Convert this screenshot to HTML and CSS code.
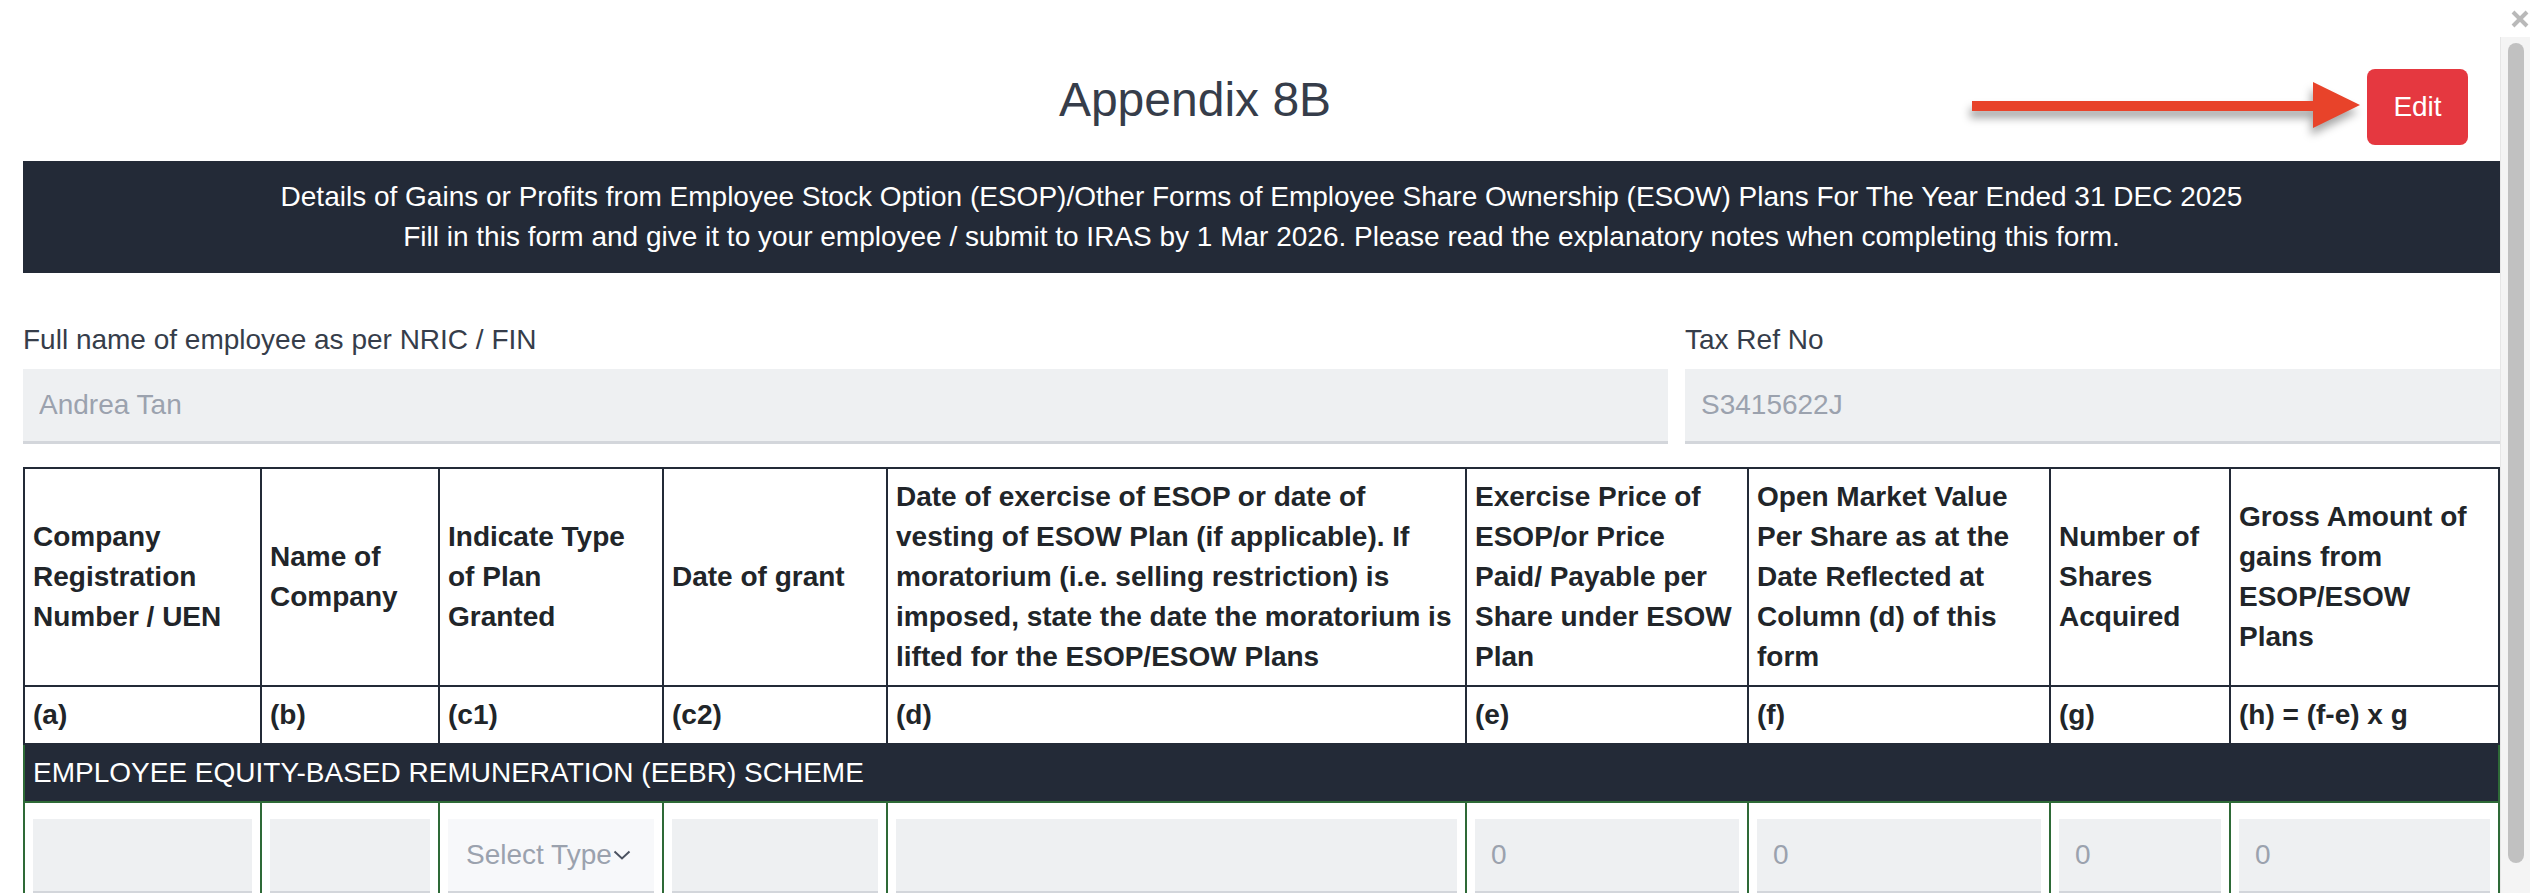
FILE: index.html
```html
<!DOCTYPE html>
<html lang="en">
<head>
<meta charset="utf-8">
<title>Appendix 8B</title>
<link rel="stylesheet" href="styles.css">
</head>
<body>
<div class="topbar">
  <button class="close" aria-label="Close">
    <svg width="20" height="18" viewBox="0 0 20 18"><path d="M3 2 L17 16 M17 2 L3 16" stroke="#b9b9b9" stroke-width="4" stroke-linecap="butt" fill="none"/></svg>
  </button>
</div>
<div class="main">
  <div class="scroll">
    <header class="head-row">
      <h1 class="title">Appendix 8B</h1>
      <button class="edit">Edit</button>
    </header>
    <div class="banner">
      <div>Details of Gains or Profits from Employee Stock Option (ESOP)/Other Forms of Employee Share Ownership (ESOW) Plans For The Year Ended 31 DEC 2025</div>
      <div>Fill in this form and give it to your employee / submit to IRAS by 1 Mar 2026. Please read the explanatory notes when completing this form.</div>
    </div>
    <div class="fields">
      <label class="fld">
        <span class="lbl">Full name of employee as per NRIC / FIN</span>
        <input class="box" value="Andrea Tan" readonly>
      </label>
      <label class="fld">
        <span class="lbl">Tax Ref No</span>
        <input class="box" value="S3415622J" readonly>
      </label>
    </div>
    <table class="grid">
      <colgroup>
        <col class="w-a"><col class="w-b"><col class="w-c1"><col class="w-c2"><col class="w-d"><col class="w-e"><col class="w-f"><col class="w-g"><col>
      </colgroup>
      <thead>
        <tr class="hdr">
          <th>Company Registration Number / UEN</th>
          <th>Name of Company</th>
          <th class="tight">Indicate Type of Plan Granted</th>
          <th>Date of grant</th>
          <th>Date of exercise of ESOP or date of vesting of ESOW Plan (if applicable). If moratorium (i.e. selling restriction) is imposed, state the date the moratorium is lifted for the ESOP/ESOW Plans</th>
          <th class="tight">Exercise Price of ESOP/or Price Paid/ Payable per Share under ESOW Plan</th>
          <th>Open Market Value Per Share as at the Date Reflected at Column (d) of this form</th>
          <th>Number of Shares Acquired</th>
          <th class="tight">Gross Amount of gains from ESOP/ESOW Plans</th>
        </tr>
        <tr class="letters">
          <th>(a)</th><th>(b)</th><th>(c1)</th><th>(c2)</th><th>(d)</th><th>(e)</th><th>(f)</th><th>(g)</th><th>(h) = (f-e) x g</th>
        </tr>
      </thead>
      <tbody>
        <tr class="section"><td colspan="9">EMPLOYEE EQUITY-BASED REMUNERATION (EEBR) SCHEME</td></tr>
        <tr class="data">
          <td><input class="box" readonly></td>
          <td><input class="box" readonly></td>
          <td><div class="select"><span>Select Type</span><svg class="chev" width="18" height="10" viewBox="0 0 18 10"><path d="M1.5 1.5 L9 8.5 L16.5 1.5" stroke="#4b5260" stroke-width="2" fill="none"/></svg></div></td>
          <td><input class="box" readonly></td>
          <td><input class="box" readonly></td>
          <td><input class="box" value="0" readonly></td>
          <td><input class="box" value="0" readonly></td>
          <td><input class="box" value="0" readonly></td>
          <td><input class="box" value="0" readonly></td>
        </tr>
      </tbody>
    </table>
  </div>
  <div class="sbar"><div class="thumb"></div></div>
</div>
<svg class="arrow" width="420" height="90" viewBox="0 0 420 90">
  <rect x="12" y="31" width="343" height="10" fill="#e8432a"/>
  <polygon points="353,12 400,35 353,58" fill="#e8432a"/>
</svg>
</body>
</html>
```
FILE: styles.css
```css
* { box-sizing: border-box; }

html, body {
  margin: 0;
  background: #ffffff;
}

body {
  height: 893px;
  display: flex;
  flex-direction: column;
  overflow: hidden;
  font-family: "Liberation Sans", Arial, Helvetica, sans-serif;
  font-size: 28px;
  line-height: 40px;
  color: #212529;
  position: relative;
}

.topbar {
  height: 37px;
  flex: none;
  display: flex;
  justify-content: flex-end;
  align-items: flex-start;
  padding-right: 15px;
}

.close {
  margin-top: 10px;
  padding: 0;
  border: 0;
  background: none;
  width: 20px;
  height: 18px;
  display: block;
}
.close svg { display: block; }

.main {
  flex: 1;
  min-height: 0;
  display: flex;
  margin-right: 15px;
}

.scroll {
  flex: 1;
  min-width: 0;
  overflow: hidden;
  padding-left: 23px;
}

.sbar {
  flex: none;
  width: 30px;
  background: #f4f4f4;
  border-left: 1px solid #e6e6e6;
  padding: 6px 6px 0 7px;
}
.thumb {
  height: 820px;
  background: #c1c1c1;
  border-radius: 8px;
}

.head-row {
  display: flex;
  align-items: flex-start;
  margin-top: 32px;
}

.title {
  flex: 1;
  margin: 3px 0 0 0;
  text-align: center;
  font-size: 48px;
  line-height: 56px;
  font-weight: 400;
  color: #363d4a;
}

.edit {
  width: 101px;
  height: 76px;
  margin-right: 32px;
  border: 0;
  border-radius: 8px;
  background: #e53840;
  color: #ffffff;
  font-family: inherit;
  font-size: 28px;
  padding: 0;
}

.banner {
  margin-top: 16px;
  background: #232a37;
  color: #ffffff;
  text-align: center;
  padding: 16px 0;
}

.fields {
  display: grid;
  grid-template-columns: 1645fr 815fr;
  column-gap: 17px;
  margin-top: 47px;
}

.fld { display: block; }

.lbl {
  display: block;
  color: #363d4a;
  margin-bottom: 9px;
}

.box {
  display: block;
  width: 100%;
  height: 75px;
  margin: 0;
  padding: 0 16px;
  border: 0;
  border-bottom: 3px solid #d3d6db;
  background: #eef0f2;
  color: #9ba2ae;
  font-family: inherit;
  font-size: 28px;
  outline: none;
}

.grid {
  margin-top: 23px;
  width: 100%;
  table-layout: fixed;
  border-collapse: collapse;
}
.w-a { width: 237px; }
.w-b { width: 178px; }
.w-c1 { width: 224px; }
.w-c2 { width: 224px; }
.w-d { width: 579px; }
.w-e { width: 282px; }
.w-f { width: 302px; }
.w-g { width: 180px; }

.grid th {
  border: 2px solid #232a37;
  padding: 8px;
  text-align: left;
  vertical-align: middle;
  font-weight: 700;
  color: #212529;
}
.grid th.tight { padding-right: 13px; }

.grid td {
  border: 2px solid #2e6a37;
  padding: 16px 8px 16px 8px;
}

.section td {
  background: #232a37;
  color: #ffffff;
  padding: 8px;
}

.select {
  height: 75px;
  display: flex;
  align-items: center;
  padding-left: 18px;
  background: #f7f8fa;
  border-bottom: 3px solid #d3d6db;
  color: #9ba2ae;
  white-space: nowrap;
  overflow: hidden;
}
.chev { margin-left: 1px; flex: none; }

.arrow {
  position: absolute;
  left: 1960px;
  top: 70px;
  filter: drop-shadow(-2px 7px 4px rgba(0, 0, 0, 0.35));
}
```
